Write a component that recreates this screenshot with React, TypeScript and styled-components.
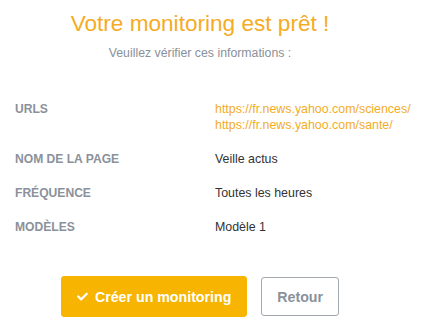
import React from "react";
import styled, { createGlobalStyle } from "styled-components";

const Global = createGlobalStyle`
  html, body { margin: 0; padding: 0; background: #ffffff; }
  body { font-family: "Liberation Sans", Arial, sans-serif; }
`;

const Page = styled.div`
  width: 400px;
  display: flex;
  flex-direction: column;
  align-items: center;
`;

const Title = styled.h1`
  margin: 11px 0 0;
  font-size: 22.6px;
  line-height: 26px;
  font-weight: 400;
  color: #f5ac25;
`;

const Subtitle = styled.p`
  margin: 8px 0 0;
  font-size: 12.3px;
  line-height: 16px;
  color: #8a9099;
`;

const Details = styled.dl`
  align-self: stretch;
  margin: 40px 0 0;
  padding-left: 15px;
  display: grid;
  grid-template-columns: 200px 1fr;
  row-gap: 18px;
  line-height: 16px;
`;

const Label = styled.dt`
  font-size: 12.1px;
  font-weight: 700;
  color: #8b919a;
  text-transform: uppercase;
`;

const Value = styled.dd<{ $link?: boolean }>`
  margin: 0;
  font-size: 12.4px;
  white-space: nowrap;
  color: ${(p) => (p.$link ? "#f2ad1f" : "#333333")};
  display: flex;
  flex-direction: column;
`;

const Actions = styled.div`
  margin-top: 41px;
  display: flex;
  align-items: center;
  gap: 14px;
`;

const Button = styled.button<{ $primary?: boolean }>`
  font-family: "Liberation Sans", Arial, sans-serif;
  font-size: 14.2px;
  font-weight: 700;
  border-radius: 3px;
  cursor: pointer;
  display: flex;
  align-items: center;
  gap: 7px;
  padding: 0 15px;
  height: ${(p) => (p.$primary ? "41px" : "39px")};
  border: 1px solid ${(p) => (p.$primary ? "#f7b400" : "#a3a8b0")};
  background: ${(p) => (p.$primary ? "#f7b400" : "#ffffff")};
  color: ${(p) => (p.$primary ? "#ffffff" : "#8a919b")};
`;

const Check = () => (
  <svg width="11" height="9" viewBox="0 0 512 400" aria-hidden="true">
    <path
      fill="#ffffff"
      d="M173.9 389.8L7.5 223.4c-10-10-10-26.2 0-36.2l36.2-36.2c10-10 26.2-10 36.2 0L192 263.1 432.1 23c10-10 26.2-10 36.2 0l36.2 36.2c10 10 10 26.2 0 36.2L210.1 389.8c-10 10-26.2 10-36.2 0z"
    />
  </svg>
);

const rows: { label: string; values: string[]; link?: boolean }[] = [
  {
    label: "URLs",
    values: ["https://fr.news.yahoo.com/sciences/", "https://fr.news.yahoo.com/sante/"],
    link: true,
  },
  { label: "Nom de la page", values: ["Veille actus"] },
  { label: "Fréquence", values: ["Toutes les heures"] },
  { label: "Modèles", values: ["Modèle 1"] },
];

export default function App() {
  return (
    <Page>
      <Global />
      <Title>Votre monitoring est prêt !</Title>
      <Subtitle>Veuillez vérifier ces informations :</Subtitle>
      <Details>
        {rows.map((r) => (
          <React.Fragment key={r.label}>
            <Label>{r.label}</Label>
            <Value $link={r.link}>
              {r.values.map((v) => (
                <span key={v}>{v}</span>
              ))}
            </Value>
          </React.Fragment>
        ))}
      </Details>
      <Actions>
        <Button $primary>
          <Check />
          Créer un monitoring
        </Button>
        <Button>Retour</Button>
      </Actions>
    </Page>
  );
}
